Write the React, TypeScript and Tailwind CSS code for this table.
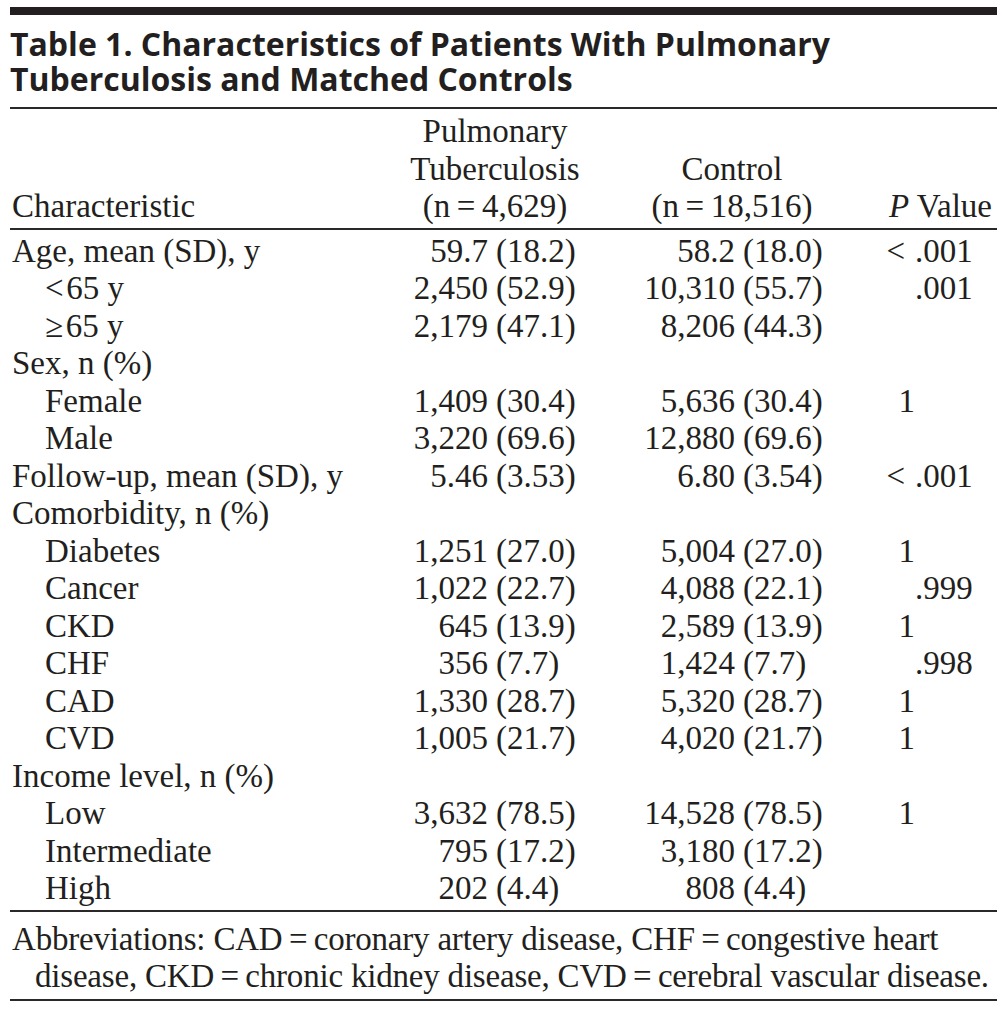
type PVal = { lt?: boolean; int?: string; frac?: string };

type Row = {
  label: string;
  indent?: boolean;
  a?: [string, string];
  b?: [string, string];
  p?: PVal;
};

const rows: Row[] = [
  { label: "Age, mean (SD), y", a: ["59.7", "(18.2)"], b: ["58.2", "(18.0)"], p: { lt: true, frac: ".001" } },
  { label: "<\u200a65 y", indent: true, a: ["2,450", "(52.9)"], b: ["10,310", "(55.7)"], p: { frac: ".001" } },
  { label: "\u2265\u200a65 y", indent: true, a: ["2,179", "(47.1)"], b: ["8,206", "(44.3)"] },
  { label: "Sex, n (%)" },
  { label: "Female", indent: true, a: ["1,409", "(30.4)"], b: ["5,636", "(30.4)"], p: { int: "1" } },
  { label: "Male", indent: true, a: ["3,220", "(69.6)"], b: ["12,880", "(69.6)"] },
  { label: "Follow-up, mean (SD), y", a: ["5.46", "(3.53)"], b: ["6.80", "(3.54)"], p: { lt: true, frac: ".001" } },
  { label: "Comorbidity, n (%)" },
  { label: "Diabetes", indent: true, a: ["1,251", "(27.0)"], b: ["5,004", "(27.0)"], p: { int: "1" } },
  { label: "Cancer", indent: true, a: ["1,022", "(22.7)"], b: ["4,088", "(22.1)"], p: { frac: ".999" } },
  { label: "CKD", indent: true, a: ["645", "(13.9)"], b: ["2,589", "(13.9)"], p: { int: "1" } },
  { label: "CHF", indent: true, a: ["356", "(7.7)"], b: ["1,424", "(7.7)"], p: { frac: ".998" } },
  { label: "CAD", indent: true, a: ["1,330", "(28.7)"], b: ["5,320", "(28.7)"], p: { int: "1" } },
  { label: "CVD", indent: true, a: ["1,005", "(21.7)"], b: ["4,020", "(21.7)"], p: { int: "1" } },
  { label: "Income level, n (%)" },
  { label: "Low", indent: true, a: ["3,632", "(78.5)"], b: ["14,528", "(78.5)"], p: { int: "1" } },
  { label: "Intermediate", indent: true, a: ["795", "(17.2)"], b: ["3,180", "(17.2)"] },
  { label: "High", indent: true, a: ["202", "(4.4)"], b: ["808", "(4.4)"] },
];

function Rule({ thick = false }: { thick?: boolean }) {
  return <div className={thick ? "h-[8px] bg-[#231f20]" : "h-[2px] bg-[#2b2829]"} />;
}

function DataRow({ row }: { row: Row }) {
  return (
    <div className="grid grid-cols-[290px_188px_111px_136px_135px_45px_78px] h-[37.5px] leading-[37.5px] whitespace-nowrap">
      <div className={row.indent ? "pl-[35px]" : "pl-[2px]"}>{row.label}</div>
      <div className="text-right">{row.a?.[0]}</div>
      <div className="pl-[8px]">{row.a?.[1]}</div>
      <div className="text-right">{row.b?.[0]}</div>
      <div className="pl-[8px]">{row.b?.[1]}</div>
      <div className="text-right">
        {row.p?.lt && <span className="mr-[10px]">&lt;</span>}
        {row.p?.int}
      </div>
      <div>{row.p?.frac}</div>
    </div>
  );
}

export default function App() {
  return (
    <div className="w-[1007px] h-[1009px] bg-white px-[10px] pt-[7px] text-[#231f20] font-['Liberation_Serif',serif] text-[33px]">
      <Rule thick />
      <h1 className="mt-[11px] font-['Open_Sans',sans-serif] font-bold text-[32px] leading-[35px]">
        Table 1. Characteristics of Patients With Pulmonary
        <br />
        Tuberculosis and Matched Controls
      </h1>
      <div className="mt-[11px]">
        <Rule />
      </div>

      {/* column headings */}
      <div className="grid grid-cols-[390px_190px_50px_184px_1fr] items-end leading-[37.5px] pt-[4px] pb-[2px] whitespace-nowrap">
        <div className="pl-[2px]">Characteristic</div>
        <div className="text-center">
          <div>Pulmonary</div>
          <div>Tuberculosis</div>
          <div>(n{"\u2009=\u2009"}4,629)</div>
        </div>
        <div />
        <div className="text-center">
          <div>Control</div>
          <div>(n{"\u2009=\u2009"}18,516)</div>
        </div>
        <div className="text-right pr-[5px]">
          <i>P</i> Value
        </div>
      </div>
      <Rule />

      <div className="pt-[3px]">
        {rows.map((r, i) => (
          <DataRow key={i} row={r} />
        ))}
      </div>
      <div className="mt-[2px]">
        <Rule />
      </div>

      {/* footnote */}
      <div className="leading-[37px] pt-[9px] pb-[4px] whitespace-nowrap tracking-[-0.2px]">
        <div className="pl-[2px]">
          Abbreviations: CAD{"\u2009=\u2009"}coronary artery disease, CHF{"\u2009=\u2009"}congestive heart
        </div>
        <div className="pl-[25px]">
          disease, CKD{"\u2009=\u2009"}chronic kidney disease, CVD{"\u2009=\u2009"}cerebral vascular disease.
        </div>
      </div>
      <Rule />
    </div>
  );
}
